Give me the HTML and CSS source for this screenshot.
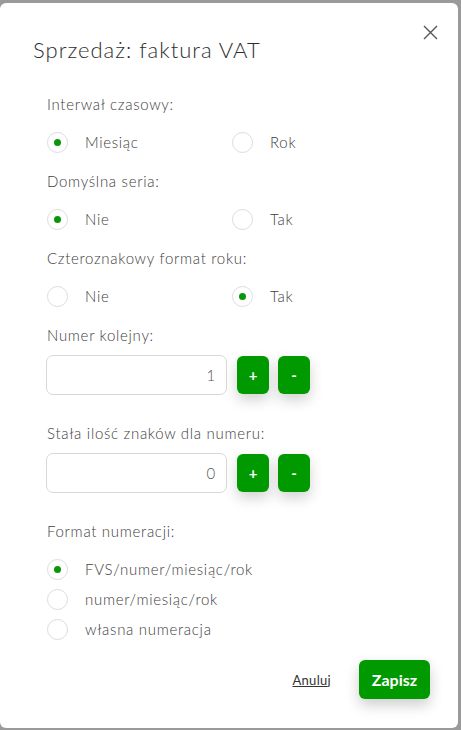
FILE: index.html
```html
<!DOCTYPE html>
<html lang="pl">
<head>
<meta charset="utf-8">
<title>Sprzedaż: faktura VAT</title>
<link rel="stylesheet" href="styles.css">
</head>
<body>
<div class="modal">
  <button class="close" aria-label="Zamknij">
    <svg width="15" height="15" viewBox="0 0 15 15"><path d="M1 1L14 14M14 1L1 14" stroke="#555" stroke-width="1.4" fill="none"/></svg>
  </button>
  <h1 class="title">Sprzedaż: faktura VAT</h1>
  <div class="body">
    <div class="label">Interwał czasowy:</div>
    <div class="radio-row">
      <label class="radio"><span class="circle checked"></span><span>Miesiąc</span></label>
      <label class="radio"><span class="circle"></span><span>Rok</span></label>
    </div>
    <div class="label">Domyślna seria:</div>
    <div class="radio-row">
      <label class="radio"><span class="circle checked"></span><span>Nie</span></label>
      <label class="radio"><span class="circle"></span><span>Tak</span></label>
    </div>
    <div class="label">Czteroznakowy format roku:</div>
    <div class="radio-row">
      <label class="radio"><span class="circle"></span><span>Nie</span></label>
      <label class="radio"><span class="circle checked"></span><span>Tak</span></label>
    </div>
    <div class="label label-num">Numer kolejny:</div>
    <div class="num-row">
      <div class="input">1</div>
      <button class="btn-sq">+</button>
      <button class="btn-sq">-</button>
    </div>
    <div class="label label-num second">Stała ilość znaków dla numeru:</div>
    <div class="num-row">
      <div class="input">0</div>
      <button class="btn-sq">+</button>
      <button class="btn-sq">-</button>
    </div>
    <div class="label second">Format numeracji:</div>
    <div class="radio-list">
      <label class="radio"><span class="circle checked"></span><span>FVS/numer/miesiąc/rok</span></label>
      <label class="radio"><span class="circle"></span><span>numer/miesiąc/rok</span></label>
      <label class="radio"><span class="circle"></span><span>własna numeracja</span></label>
    </div>
  </div>
  <div class="footer">
    <a class="cancel" href="#">Anuluj</a>
    <button class="save">Zapisz</button>
  </div>
</div>
</body>
</html>
```
FILE: styles.css
```css
* { box-sizing: border-box; }
html, body { margin: 0; padding: 0; }
body {
  background: #9a9a9a;
  width: 461px;
  height: 730px;
  padding-top: 3px;
  font-family: Lato, "Noto Sans", sans-serif;
  font-weight: 300;
  color: #404040;
  overflow: hidden;
}
.modal {
  position: relative;
  width: 458px;
  height: 725px;
  background: #fff;
  border-radius: 6px;
  padding-top: 34px;
}
.close {
  position: absolute;
  top: 22px;
  left: 423px;
  padding: 0;
  border: 0;
  background: none;
  width: 15px;
  height: 15px;
  display: block;
}
.close svg { display: block; }
.title {
  margin: 0 0 0 33px;
  font-size: 22px;
  line-height: 26px;
  font-weight: 300;
  letter-spacing: 1px;
  color: #2e2e2e;
}
.body {
  padding: 31px 0 0 47px;
  letter-spacing: 0.7px;
}
.label {
  font-size: 15px;
  line-height: 20px;
  margin-bottom: 17px;
}
.radio-row {
  display: grid;
  grid-template-columns: 185px 185px;
  margin-bottom: 18px;
}
.radio {
  display: flex;
  align-items: center;
  gap: 17px;
  height: 22px;
  font-size: 15px;
}
.circle {
  width: 21px;
  height: 21px;
  border: 1px solid #dcdcdc;
  border-radius: 50%;
  display: flex;
  align-items: center;
  justify-content: center;
  flex: none;
}
.circle.checked::after {
  content: "";
  width: 7px;
  height: 7px;
  border-radius: 50%;
  background: #0a960a;
}
.label-num { margin-bottom: 10px; }
.label.second { margin-top: 28px; }
.num-row {
  display: flex;
  align-items: center;
  margin-left: -1px;
}
.input {
  width: 181px;
  height: 40px;
  border: 1px solid #d8d8d8;
  border-radius: 7px;
  text-align: right;
  padding-right: 10px;
  font-size: 15px;
  line-height: 38px;
  color: #555;
}
.btn-sq {
  width: 32px;
  height: 38px;
  margin-left: 10px;
  border: 0;
  border-radius: 6px;
  background: #009a00;
  color: #fff;
  font-family: inherit;
  font-weight: 700;
  font-size: 15px;
  padding: 0;
  box-shadow: 0 6px 14px rgba(0, 0, 0, 0.18);
}
.btn-sq + .btn-sq { margin-left: 9px; }
.radio-list {
  display: flex;
  flex-direction: column;
  gap: 8px;
}
.footer {
  display: flex;
  justify-content: flex-end;
  align-items: center;
  gap: 28px;
  padding: 20px 28px 0 0;
}
.cancel {
  color: #333;
  font-size: 13px;
  font-weight: 400;
  letter-spacing: 0.3px;
  text-decoration: underline;
}
.save {
  width: 71px;
  height: 39px;
  border: 0;
  border-radius: 6px;
  background: #009a00;
  color: #fff;
  font-family: inherit;
  font-weight: 700;
  font-size: 16px;
  padding: 0;
  box-shadow: 0 6px 14px rgba(0, 0, 0, 0.2);
}
```
